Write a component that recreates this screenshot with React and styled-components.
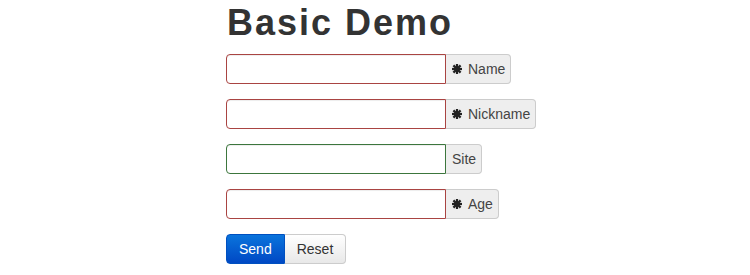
import React from "react";
import styled, { createGlobalStyle } from "styled-components";

const GlobalStyle = createGlobalStyle`
  body {
    margin: 0;
    background: #ffffff;
    font-family: "Liberation Sans", Arial, sans-serif;
    color: #333333;
  }
`;

const Page = styled.div`
  padding: 0 0 0 227px;
`;

const Title = styled.h1`
  margin: 0;
  height: 54px;
  padding-top: 3px;
  box-sizing: border-box;
  font-size: 36px;
  line-height: 40px;
  font-weight: bold;
  color: #333333;
  letter-spacing: 2px;
`;

const Form = styled.form`
  display: flex;
  flex-direction: column;
  align-items: flex-start;
  gap: 15px;
  margin-left: -1px;
`;

const InputGroup = styled.div`
  display: flex;
  height: 30px;
`;

const Field = styled.input`
  width: 220px;
  height: 30px;
  box-sizing: border-box;
  margin: 0;
  padding: 4px 8px;
  border: 1px solid ${(p) => (p.$state === "ok" ? "#3c763d" : "#a94442")};
  border-radius: 4px 0 0 4px;
  box-shadow: inset 0 1px 1px rgba(0, 0, 0, 0.075);
  font: 14px "Liberation Sans", Arial, sans-serif;
  outline: none;
`;

const Addon = styled.span`
  display: flex;
  align-items: center;
  gap: 6px;
  height: 30px;
  box-sizing: border-box;
  padding: 0 5px 0 6px;
  background: #eeeeee;
  border: 1px solid #cccccc;
  border-left: 0;
  border-radius: 0 4px 4px 0;
  font-size: 14px;
  color: #444444;
`;

const Buttons = styled.div`
  display: flex;
`;

const Button = styled.button`
  height: 30px;
  margin: 0;
  padding: 0 12px;
  font: 14px "Liberation Sans", Arial, sans-serif;
  cursor: pointer;
  border: 1px solid ${(p) => (p.$primary ? "#0050c0" : "#cccccc")};
  color: ${(p) => (p.$primary ? "#ffffff" : "#333333")};
  background: ${(p) =>
    p.$primary
      ? "linear-gradient(to bottom, #0a74dc, #0048c4)"
      : "linear-gradient(to bottom, #ffffff, #e8e8e8)"};
  border-radius: ${(p) => (p.$primary ? "4px 0 0 4px" : "0 4px 4px 0")};
  ${(p) => (p.$primary ? "" : "border-left: 0;")}
`;

const Asterisk = () => (
  <svg width="10" height="10" viewBox="0 0 10 10" aria-hidden="true">
    <g stroke="#222" strokeWidth="2.2" strokeLinecap="butt">
      <line x1="5" y1="0" x2="5" y2="10" />
      <line x1="0" y1="5" x2="10" y2="5" />
      <line x1="1.4" y1="1.4" x2="8.6" y2="8.6" />
      <line x1="8.6" y1="1.4" x2="1.4" y2="8.6" />
    </g>
    <circle cx="5" cy="5" r="2.4" fill="#222" />
  </svg>
);

const fields = [
  { label: "Name", required: true },
  { label: "Nickname", required: true },
  { label: "Site", required: false },
  { label: "Age", required: true },
];

export default function App() {
  return (
    <>
      <GlobalStyle />
      <Page>
        <Title>Basic Demo</Title>
        <Form onSubmit={(e) => e.preventDefault()}>
          {fields.map((f) => (
            <InputGroup key={f.label}>
              <Field $state={f.required ? "error" : "ok"} />
              <Addon>
                {f.required && <Asterisk />}
                {f.label}
              </Addon>
            </InputGroup>
          ))}
          <Buttons>
            <Button type="submit" $primary>
              Send
            </Button>
            <Button type="reset">Reset</Button>
          </Buttons>
        </Form>
      </Page>
    </>
  );
}
